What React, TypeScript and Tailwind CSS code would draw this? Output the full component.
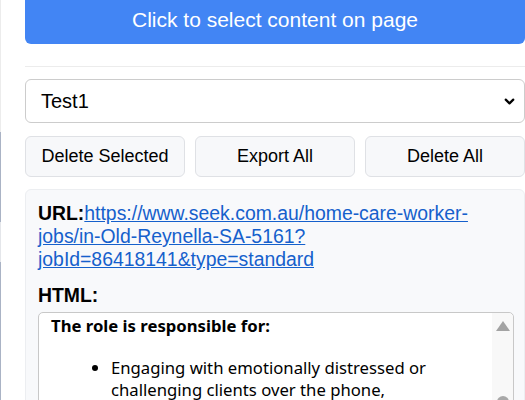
import { ChevronDown } from 'lucide-react'

const App = () => {
  return (
    <div className="flex h-[400px] w-[525px] overflow-hidden bg-white font-['Liberation_Sans',Arial,sans-serif] text-black">
      {/* page edge strip */}
      <div className="flex w-px shrink-0 flex-col">
        <div className="h-[132px] bg-[#ececec]" />
        <div className="h-[90px] bg-[#aab3c5]" />
        <div className="h-[40px] bg-[#e4e6ea]" />
        <div className="flex-1 bg-[#aab3c5]" />
      </div>

      <div className="ml-[24px] -mt-[5px] w-[500px] shrink-0">
        <button className="block h-[49px] w-full rounded-md bg-[#4285f4] text-[21px] text-white">
          Click to select content on page
        </button>

        <div className="mt-[22px] h-px bg-[#ececec]" />

        <div className="mt-[12px] flex h-[44px] items-center justify-between rounded-md border border-[#cccccc] bg-white pl-[15px] pr-[7px]">
          <span className="text-[20px]">Test1</span>
          <ChevronDown className="h-[15px] w-[15px]" strokeWidth={3.5} />
        </div>

        <div className="mt-[13px] grid grid-cols-3 gap-[10px]">
          {['Delete Selected', 'Export All', 'Delete All'].map((label) => (
            <button
              key={label}
              className="h-[41px] rounded-md border border-[#dfe1e5] bg-[#f7f8fa] text-[18px]"
            >
              {label}
            </button>
          ))}
        </div>

        <div className="mt-[12px] rounded-md border border-[#eceef1] bg-[#f8f9fb] pt-[12px] pl-[12px] pr-[10px] pb-[12px]">
          <div className="text-[19.4px] leading-[23px]">
            <span className="font-bold">URL:</span>
            <a className="text-[#1560cc] underline" href="#">
              https://www.seek.com.au/home-care-worker-jobs/in-Old-Reynella-SA-5161?jobId=86418141&amp;type=standard
            </a>
          </div>

          <div className="mt-[13px] text-[19.4px] font-bold leading-[23px]">HTML:</div>

          <div className="mt-[5px] flex h-[200px] rounded-[5px] border border-[#c8c8c8] bg-white font-['Noto_Sans',sans-serif]">
            <div className="flex-1 pl-[12px] pt-[2px] text-[16.7px] leading-[22px]">
              <p className="font-bold">The role is responsible for:</p>
              <ul className="mt-[20px] list-disc pl-[60px] pr-[20px]">
                <li>
                  Engaging with emotionally distressed or challenging clients over the phone,
                </li>
              </ul>
            </div>
            <div className="flex w-[21px] flex-col items-center rounded-tr-[5px] bg-[#f8f8f8] pt-[8px]">
              <svg width="14" height="10" viewBox="0 0 14 10">
                <polygon points="7,0 14,10 0,10" fill="#a3a3a3" />
              </svg>
              <div className="mt-[65px] h-[40px] w-[12px] rounded-full bg-[#a8a8a8]" />
            </div>
          </div>
        </div>
      </div>
    </div>
  )
}

export default App
